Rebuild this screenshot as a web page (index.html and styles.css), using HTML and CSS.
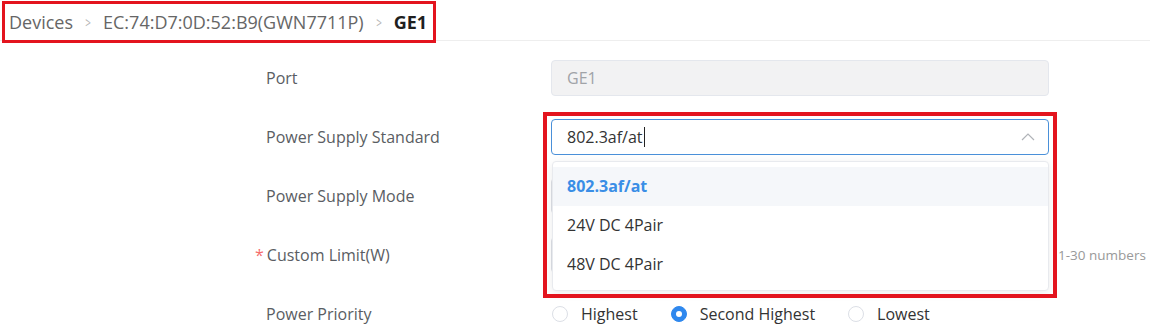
FILE: index.html
```html
<!DOCTYPE html>
<html lang="en">
<head>
  <meta charset="UTF-8" />
  <title>GE1 - Port settings</title>
  <link rel="stylesheet" href="styles.css">
</head>
<body>

  <div class="crumbs">
    <div class="crumbs-box">
      <span class="crumb">Devices</span>
      <span class="sep">&gt;</span>
      <span class="crumb">EC:74:D7:0D:52:B9(GWN7711P)</span>
      <span class="sep">&gt;</span>
      <span class="crumb current">GE1</span>
    </div>
  </div>

  <div class="form">
    <div class="row">
      <label>Port</label>
      <input class="field" type="text" value="GE1" disabled />
    </div>

    <div class="row">
      <label>Power Supply Standard</label>
      <div class="select open">
        <div class="field select-value">802.3af/at<span class="caret"></span></div>
        <svg class="chevron" width="14" height="8" viewBox="0 0 14 8"><path d="M1 7 L7 1 L13 7" fill="none" stroke="#b0b3b8" stroke-width="1.2"/></svg>
        <ul class="dropdown">
          <li class="selected">802.3af/at</li>
          <li>24V DC 4Pair</li>
          <li>48V DC 4Pair</li>
        </ul>
        <div class="mark"></div>
      </div>
    </div>

    <div class="row">
      <label>Power Supply Mode</label>
      <div class="field"></div>
    </div>

    <div class="row">
      <label class="required">Custom Limit(W)</label>
      <div class="field"></div>
      <span class="hint">1-30 numbers</span>
    </div>

    <div class="row">
      <label>Power Priority</label>
      <div class="radios">
        <span class="radio"><i></i>Highest</span>
        <span class="radio checked"><i></i>Second Highest</span>
        <span class="radio"><i></i>Lowest</span>
      </div>
    </div>
  </div>

</body>
</html>
```

FILE: styles.css
```css
body {
  font-family: 'Open Sans', 'Noto Sans', sans-serif;
  background: #fff;
  margin: 0;
  padding: 0;
  color: #333;
}

.crumbs {
  height: 41px;
  border-bottom: 1px solid #eee;
  padding: 1px 0 0 2px;
  box-sizing: border-box;
}

.crumbs-box {
  display: inline-flex;
  align-items: center;
  height: 36px;
  padding: 0 0 0 4px;
  width: 424px;
  border: 3px solid #e3141e;
  box-sizing: content-box;
  font-size: 18px;
  color: #666;
}

.sep {
  color: #b5b5b5;
  font-size: 14px;
  margin: 0 11px;
  transform: scaleX(0.7);
}

.crumb.current {
  color: #1f1f1f;
  font-weight: bold;
}

.form {
  padding: 19px 0 0 266px;
}

.row {
  display: flex;
  align-items: center;
  height: 36px;
  margin-bottom: 23px;
}

.row:last-child {
  margin-bottom: 0;
}

label {
  width: 285px;
  font-size: 16px;
  font-weight: 500;
  color: #5a5d63;
}

label.required {
  margin-left: -11px;
  width: 296px;
}

label.required::before {
  content: '*';
  color: #f56c6c;
  margin-right: 3px;
}

.field {
  width: 498px;
  height: 36px;
  box-sizing: border-box;
  border: 1px solid #dcdfe6;
  border-radius: 4px;
  background: #fff;
  font-family: inherit;
  font-size: 16px;
  padding: 0 15px;
  color: #333;
}

input.field:disabled {
  background: #f2f2f3;
  border-color: #e4e7ed;
  color: #a0a3a8;
}

.select {
  position: relative;
}

.select-value {
  display: flex;
  align-items: center;
  border-color: #4a90d9;
}

.caret {
  display: inline-block;
  width: 1px;
  height: 20px;
  background: #222;
  margin-left: 1px;
}

.chevron {
  position: absolute;
  right: 14px;
  top: 14px;
}

.dropdown {
  position: absolute;
  top: 42px;
  left: 1px;
  width: 497px;
  margin: 0;
  padding: 5px 0 6px;
  list-style: none;
  background: #fff;
  border: 1px solid #e8eaee;
  border-radius: 4px;
  box-shadow: 0 2px 10px rgba(0, 0, 0, 0.08);
  box-sizing: border-box;
  z-index: 2;
}

.dropdown li {
  height: 39px;
  line-height: 39px;
  padding-left: 14px;
  font-size: 16px;
  color: #333;
}

.dropdown li.selected {
  background: #f5f7fa;
  color: #3a8ee6;
  font-weight: bold;
}

.mark {
  position: absolute;
  left: -8px;
  top: -7px;
  width: 514px;
  height: 186px;
  border: 4px solid #e3141e;
  box-sizing: border-box;
  z-index: 3;
  pointer-events: none;
}

.hint {
  margin-left: 9px;
  font-size: 13.5px;
  color: #999;
}

.radios {
  display: flex;
  gap: 32px;
  font-size: 16px;
  color: #333;
}

.radio {
  display: flex;
  align-items: center;
}

.radio i {
  width: 16px;
  height: 16px;
  box-sizing: border-box;
  border: 1px solid #dcdfe6;
  border-radius: 50%;
  margin: 0 13px 0 1px;
  position: relative;
}

.radio.checked i {
  background: #2f88ee;
  border-color: #2f88ee;
}

.radio.checked i::after {
  content: '';
  position: absolute;
  left: 4px;
  top: 4px;
  width: 6px;
  height: 6px;
  border-radius: 50%;
  background: #fff;
}
```
